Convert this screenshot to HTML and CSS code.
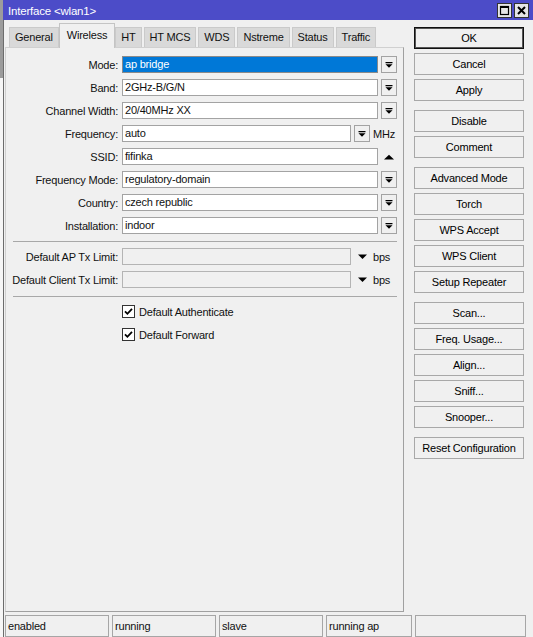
FILE: index.html
```html
<!DOCTYPE html>
<html>
<head>
<meta charset="utf-8">
<title>Interface &lt;wlan1&gt;</title>
<link rel="stylesheet" href="styles.css">
</head>
<body>
<div class="desk">
  <div class="strip"></div>
  <div class="win">
    <div class="titlebar">
      <span class="title">Interface &lt;wlan1&gt;</span>
      <div class="tb-btns">
        <span class="tb-btn"><svg width="13" height="13" viewBox="0 0 13 13"><rect x="2.5" y="2.5" width="8" height="8" fill="none" stroke="#000" stroke-width="1.2"/><rect x="2" y="2" width="9" height="2" fill="#000"/></svg></span>
        <span class="tb-btn"><svg width="13" height="13" viewBox="0 0 13 13"><path d="M3 3l7 7M10 3l-7 7" stroke="#000" stroke-width="2" fill="none"/></svg></span>
      </div>
    </div>
    <div class="main">
      <div class="work">
        <div class="left">
          <div class="tabs">
            <span class="tab">General</span>
            <span class="tab active">Wireless</span>
            <span class="tab">HT</span>
            <span class="tab">HT MCS</span>
            <span class="tab">WDS</span>
            <span class="tab">Nstreme</span>
            <span class="tab">Status</span>
            <span class="tab">Traffic</span>
          </div>
          <div class="panel">
            <div class="form">
              <div class="row">
                <span class="lbl">Mode:</span>
                <div class="ctl"><span class="box sel">ap bridge</span><span class="dd"><svg width="14" height="15" viewBox="0 0 14 15"><path d="M3.5 5h7v1.2h-7zM3.5 7.3h7L7 10.8z"/></svg></span></div>
              </div>
              <div class="row">
                <span class="lbl">Band:</span>
                <div class="ctl"><span class="box">2GHz-B/G/N</span><span class="dd"><svg width="14" height="15" viewBox="0 0 14 15"><path d="M3.5 5h7v1.2h-7zM3.5 7.3h7L7 10.8z"/></svg></span></div>
              </div>
              <div class="row">
                <span class="lbl">Channel Width:</span>
                <div class="ctl"><span class="box">20/40MHz XX</span><span class="dd"><svg width="14" height="15" viewBox="0 0 14 15"><path d="M3.5 5h7v1.2h-7zM3.5 7.3h7L7 10.8z"/></svg></span></div>
              </div>
              <div class="row">
                <span class="lbl">Frequency:</span>
                <div class="ctl"><span class="box">auto</span><span class="dd"><svg width="14" height="15" viewBox="0 0 14 15"><path d="M3.5 5h7v1.2h-7zM3.5 7.3h7L7 10.8z"/></svg></span><span class="unit">MHz</span></div>
              </div>
              <div class="row">
                <span class="lbl">SSID:</span>
                <div class="ctl"><span class="box">fifinka</span><span class="arr"><svg width="16" height="17" viewBox="0 0 16 17"><path d="M3 11.5h10L8 6.8z"/></svg></span></div>
              </div>
              <div class="row">
                <span class="lbl">Frequency Mode:</span>
                <div class="ctl"><span class="box">regulatory-domain</span><span class="dd"><svg width="14" height="15" viewBox="0 0 14 15"><path d="M3.5 5h7v1.2h-7zM3.5 7.3h7L7 10.8z"/></svg></span></div>
              </div>
              <div class="row">
                <span class="lbl">Country:</span>
                <div class="ctl"><span class="box">czech republic</span><span class="dd"><svg width="14" height="15" viewBox="0 0 14 15"><path d="M3.5 5h7v1.2h-7zM3.5 7.3h7L7 10.8z"/></svg></span></div>
              </div>
              <div class="row">
                <span class="lbl">Installation:</span>
                <div class="ctl"><span class="box">indoor</span><span class="dd"><svg width="14" height="15" viewBox="0 0 14 15"><path d="M3.5 5h7v1.2h-7zM3.5 7.3h7L7 10.8z"/></svg></span></div>
              </div>
              <div class="sep sep1"></div>
              <div class="row">
                <span class="lbl">Default AP Tx Limit:</span>
                <div class="ctl"><span class="box dis"></span><span class="arr"><svg width="16" height="17" viewBox="0 0 16 17"><path d="M4 6.5h9L8.5 11z"/></svg></span><span class="unit">bps</span></div>
              </div>
              <div class="row">
                <span class="lbl">Default Client Tx Limit:</span>
                <div class="ctl"><span class="box dis"></span><span class="arr"><svg width="16" height="17" viewBox="0 0 16 17"><path d="M4 6.5h9L8.5 11z"/></svg></span><span class="unit">bps</span></div>
              </div>
              <div class="sep sep2"></div>
              <div class="crow">
                <span></span>
                <div class="chk"><span class="cb"><svg width="11" height="11" viewBox="0 0 11 11"><path d="M2 5.3l2.4 2.5L9 2.8" stroke="#000" stroke-width="1.8" fill="none"/></svg></span><span>Default Authenticate</span></div>
              </div>
              <div class="crow">
                <span></span>
                <div class="chk"><span class="cb"><svg width="11" height="11" viewBox="0 0 11 11"><path d="M2 5.3l2.4 2.5L9 2.8" stroke="#000" stroke-width="1.8" fill="none"/></svg></span><span>Default Forward</span></div>
              </div>
            </div>
          </div>
        </div>
        <div class="right">
          <div class="grp">
            <span class="btn def">OK</span>
            <span class="btn">Cancel</span>
            <span class="btn">Apply</span>
          </div>
          <div class="grp">
            <span class="btn">Disable</span>
            <span class="btn">Comment</span>
          </div>
          <div class="grp">
            <span class="btn">Advanced Mode</span>
            <span class="btn">Torch</span>
            <span class="btn">WPS Accept</span>
            <span class="btn">WPS Client</span>
            <span class="btn">Setup Repeater</span>
          </div>
          <div class="grp">
            <span class="btn">Scan...</span>
            <span class="btn">Freq. Usage...</span>
            <span class="btn">Align...</span>
            <span class="btn">Sniff...</span>
            <span class="btn">Snooper...</span>
          </div>
          <div class="grp">
            <span class="btn">Reset Configuration</span>
          </div>
        </div>
      </div>
      <div class="status">
        <span class="cell c1">enabled</span>
        <span class="cell c2">running</span>
        <span class="cell c3">slave</span>
        <span class="cell c4">running ap</span>
        <span class="cell c5"></span>
      </div>
    </div>
  </div>
</div>
</body>
</html>
```
FILE: styles.css
```css
* { box-sizing: border-box; }
html, body { margin: 0; padding: 0; }
body {
  width: 533px;
  height: 637px;
  overflow: hidden;
  background: #f0f0f0;
  font-family: "Liberation Sans", Arial, sans-serif;
  font-size: 11px;
  letter-spacing: -0.2px;
  color: #111;
}
.desk { display: flex; height: 637px; }
.strip {
  width: 3px;
  flex: none;
  background: linear-gradient(#9c9c9c 0 78px, #f6f6f6 78px);
}
.win { flex: 1; display: flex; flex-direction: column; min-width: 0; }

.titlebar {
  height: 20px;
  flex: none;
  background: #4c4cc8;
  color: #fff;
  display: flex;
  align-items: center;
  justify-content: space-between;
  padding: 0 4px 0 5px;
}
.title { font-size: 11.5px; padding-top: 1px; }
.tb-btns { display: flex; gap: 2px; align-items: center; }
.tb-btn {
  width: 15px;
  height: 15px;
  background: #e6e6e6;
  border: 1px solid #333;
  display: flex;
  align-items: center;
  justify-content: center;
}

.main { flex: 1; display: flex; flex-direction: column; border-left: 1px solid #6c6c6c; }
.work { display: flex; height: 592px; flex: none; }
.left { width: 399px; margin-left: 1px; display: flex; flex-direction: column; }

.tabs { height: 27px; flex: none; display: flex; align-items: flex-end; padding-left: 4px; }
.tab {
  height: 20px;
  line-height: 19px;
  padding: 0 5px;
  border: 1px solid #cacaca;
  border-bottom: none;
  background: #d9d9d9;
  margin-right: 2px;
  white-space: nowrap;
}
.tab.active {
  height: 25px;
  line-height: 22px;
  padding: 0 7px;
  margin-left: -2px;
  margin-right: 0;
  margin-bottom: -1px;
  background: #f0f0f0;
  border-color: #c4c4c4;
  position: relative;
}
.panel {
  flex: 1;
  border: 1px solid #a0a0a0;
  border-top-color: #d0d0d0;
  border-left-color: #d0d0d0;
  padding: 8px 6px 0 0;
}

.form { display: flex; flex-direction: column; }
.row {
  display: grid;
  grid-template-columns: 112px 1fr;
  column-gap: 4px;
  align-items: center;
  height: 17px;
  margin-bottom: 6px;
}
.lbl { text-align: right; white-space: nowrap; }
.ctl { display: flex; gap: 3px; height: 17px; align-items: center; }
.box {
  flex: 1;
  height: 17px;
  border: 1px solid #a3a3a3;
  background: #fff;
  padding-left: 2px;
  line-height: 15px;
  white-space: nowrap;
  overflow: hidden;
}
.box.sel { background: #0078d7; color: #fff; border-color: #8a8a8a; }
.box.dis { background: #f0f0f0; border-color: #b4b4b4; }
.dd {
  width: 16px;
  height: 17px;
  flex: none;
  border: 1px solid #a3a3a3;
  background: #f0f0f0;
  display: flex;
}
.dd svg, .arr svg { display: block; fill: #000; }
.arr { width: 16px; height: 17px; flex: none; display: flex; }
.unit { width: 24px; flex: none; white-space: nowrap; }

.sep { height: 1px; background: #a8a8a8; margin-left: 7px; }
.sep1 { margin-top: 1px; margin-bottom: 6px; }
.sep2 { margin-top: 2px; margin-bottom: 8px; }

.crow {
  display: grid;
  grid-template-columns: 112px 1fr;
  column-gap: 4px;
  height: 13px;
  margin-bottom: 10px;
}
.chk { display: flex; align-items: center; gap: 4px; height: 13px; white-space: nowrap; }
.cb {
  width: 13px;
  height: 13px;
  flex: none;
  border: 1px solid #333;
  background: #fff;
  display: flex;
}
.cb svg { display: block; }

.right {
  width: 110px;
  flex: none;
  margin-left: 10px;
  padding-top: 7px;
  display: flex;
  flex-direction: column;
}
.grp { display: flex; flex-direction: column; gap: 4px; margin-bottom: 9px; }
.btn {
  height: 22px;
  border: 1px solid #a8a8a8;
  background: #f0f0f0;
  display: flex;
  align-items: center;
  justify-content: center;
  color: #000;
  white-space: nowrap;
}
.btn.def { border-color: #111; box-shadow: inset 0 0 0 1px #555; }

.status {
  display: flex;
  gap: 3px;
  margin-top: 3px;
  height: 22px;
  padding-left: 1px;
}
.cell {
  height: 22px;
  border: 1px solid #a6a6a6;
  padding-left: 2px;
  line-height: 20px;
  white-space: nowrap;
  color: #111;
}
.c1, .c2, .c3 { width: 104px; }
.c4 { width: 86px; }
.c5 { width: 111px; }
```
